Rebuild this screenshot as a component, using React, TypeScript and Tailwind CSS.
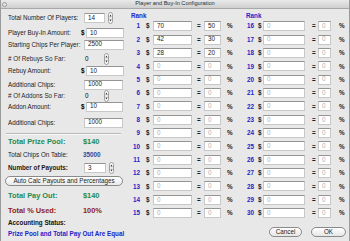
import React from "react";

const ranksA = [
  { n: 1, amt: "70", pct: "50" },
  { n: 2, amt: "42", pct: "30" },
  { n: 3, amt: "28", pct: "20" },
  ...Array.from({ length: 12 }, (_, i) => ({ n: i + 4, amt: "0", pct: "0" })),
];
const ranksB = Array.from({ length: 15 }, (_, i) => ({ n: i + 16, amt: "0", pct: "0" }));

function Field({ value, w, dim }: { value: string; w: string; dim?: boolean }) {
  return (
    <div
      className={`h-[10px] ${w} bg-white border border-[#c8c8c8] border-t-[#949494] flex items-center pl-[3px] leading-none ${
        dim ? "text-[#b0b0b0]" : "text-[#1a1a1a]"
      }`}
    >
      {value}
    </div>
  );
}

function Stepper() {
  return (
    <svg width="5" height="12" viewBox="0 0 5 12">
      <rect x="0.5" y="0.5" width="4" height="11" rx="2" fill="#fafafa" stroke="#8a8a8a" strokeWidth="0.8" />
      <line x1="0.8" y1="6" x2="4.2" y2="6" stroke="#b5b5b5" strokeWidth="0.5" />
      <path d="M1.4 4.5 L2.5 2.6 L3.6 4.5Z" fill="#333" />
      <path d="M1.4 7.5 L2.5 9.4 L3.6 7.5Z" fill="#333" />
    </svg>
  );
}

function Row({ mt, h, label, labelCls, children }: { mt: string; h: string; label: string; labelCls?: string; children?: React.ReactNode }) {
  return (
    <div className={`flex items-center pl-[7px] ${mt} ${h}`}>
      <div className={`w-[73px] shrink-0 whitespace-nowrap ${labelCls ?? "text-[6.3px] text-[#1a1a1a]"}`}>{label}</div>
      {children}
    </div>
  );
}

function RankCol({ rows, wide }: { rows: { n: number; amt: string; pct: string }[]; wide?: boolean }) {
  return (
    <div className="flex flex-col">
      <div className={`h-[8.5px] mt-[2px] flex items-center font-bold text-[6.3px] text-[#2323c8] ${wide ? "ml-[3px]" : "ml-[2px]"}`}>Rank</div>
      {rows.map((r) => (
        <div key={r.n} className="h-[13.36px] flex items-center text-[6.3px]">
          <span className="w-[11px] text-right font-bold text-[#2323c8]">{r.n}</span>
          <span className={`font-bold text-[#222] ${wide ? "ml-[4px] w-[4px]" : "ml-[6px] w-[4px]"}`}>$</span>
          <div className={wide ? "ml-[1px]" : "ml-[3px]"}>
            <Field value={r.amt} w={wide ? "w-[42px]" : "w-[39px]"} dim={r.amt === "0"} />
          </div>
          <span className={`font-bold text-[#222] w-[4px] ${wide ? "ml-[7px]" : "ml-[5px]"}`}>=</span>
          <div className={wide ? "ml-[2px]" : "ml-[3px]"}>
            <Field value={r.pct} w={wide ? "w-[13px]" : "w-[17px]"} dim={r.pct === "0"} />
          </div>
          <span className={`font-bold text-[#222] ${wide ? "ml-[8px]" : "ml-[6px]"}`}>%</span>
        </div>
      ))}
    </div>
  );
}

export default function App() {
  return (
    <div className="w-[350px] h-[241px] overflow-hidden bg-[#e8e8e8] border-x border-[#9a9a9a] font-['Liberation_Sans',Arial,sans-serif] flex flex-col">
      <div className="h-[9px] shrink-0 relative flex items-center justify-center bg-gradient-to-b from-[#e9e9e9] to-[#cfcfcf] border-b border-[#a8a8a8]">
        <div className="absolute left-[1px] top-[1.5px] w-[5px] h-[5px] rounded-full border border-[#9b9b9b] bg-[#e4e4e4]" />
        <span className="text-[5.6px] text-[#2b2b2b] leading-none">Player and Buy-In Configuration</span>
      </div>
      <div className="flex flex-1">
        <div className="w-[124px] shrink-0 flex flex-col">
          <Row mt="mt-[3px]" h="h-[12px]" label="Total Number Of Players:">
            <div className="ml-[3px] text-[6.3px]"><Field value="14" w="w-[21px]" /></div>
            <div className="ml-[3px]"><Stepper /></div>
          </Row>
          <Row mt="mt-[3px]" h="h-[12px]" label="Player Buy-In Amount:">
            <span className="text-[6.3px] font-bold w-[5px]">$</span>
            <div className="text-[6.3px]"><Field value="10" w="w-[38px]" /></div>
          </Row>
          <Row mt="mt-0" h="h-[11px]" label="Starting Chips Per Player:">
            <div className="ml-[3px] text-[6.3px]"><Field value="2500" w="w-[40px]" /></div>
          </Row>
          <Row mt="mt-[3px]" h="h-[12px]" label="# Of Rebuys So Far:" labelCls="text-[6.3px] text-[#2a2a2a]">
            <span className="ml-[4px] text-[6.3px] w-[19px]">0</span>
            <Stepper />
          </Row>
          <Row mt="mt-0" h="h-[12px]" label="Rebuy Amount:">
            <span className="text-[6.3px] font-bold w-[5px]">$</span>
            <div className="text-[6.3px]"><Field value="10" w="w-[38px]" /></div>
          </Row>
          <Row mt="mt-[2px]" h="h-[11px]" label="Additional Chips:">
            <div className="ml-[3px] text-[6.3px]"><Field value="1000" w="w-[39px]" /></div>
          </Row>
          <Row mt="mt-0" h="h-[11px]" label="# Of Addons So Far:" labelCls="text-[6.3px] text-[#2a2a2a]">
            <span className="ml-[4px] text-[6.3px] w-[19px]">0</span>
            <Stepper />
          </Row>
          <Row mt="mt-0" h="h-[11px]" label="Addon Amount:">
            <span className="text-[6.3px] font-bold w-[5px]">$</span>
            <div className="text-[6.3px]"><Field value="10" w="w-[37px]" /></div>
          </Row>
          <Row mt="mt-[5px]" h="h-[11px]" label="Additional Chips:">
            <div className="ml-[3px] text-[6.3px]"><Field value="1000" w="w-[39px]" /></div>
          </Row>
          <div className="mt-[5px] ml-[5px] w-[115px] border-t border-[#b9b9b9] border-b border-b-[#f8f8f8]" />
          <Row mt="mt-[2px]" h="h-[10px]" label="Total Prize Pool:" labelCls="text-[7.4px] font-bold text-[#1f8a50]">
            <span className="ml-[2px] text-[7.4px] font-bold text-[#1f8a50]">$140</span>
          </Row>
          <Row mt="mt-[3px]" h="h-[10px]" label="Total Chips On Table:">
            <span className="ml-[2px] text-[6.3px] font-bold text-[#2c4aa0]">35000</span>
          </Row>
          <Row mt="mt-[2px]" h="h-[12px]" label="Number of Payouts:" labelCls="text-[6.3px] font-bold text-[#1a1a1a]">
            <div className="ml-[3px] text-[6.3px]"><Field value="3" w="w-[22px]" /></div>
            <div className="ml-[3px]"><Stepper /></div>
          </Row>
          <div className="mt-[2px] ml-[4px] w-[118px] h-[10px] rounded-full border border-[#8a8a8a] bg-gradient-to-b from-[#ffffff] to-[#e9e9e9] flex items-center justify-center text-[6.3px] text-[#1a1a1a] whitespace-nowrap">
            Auto Calc Payouts and Percentages
          </div>
          <Row mt="mt-[5px]" h="h-[10px]" label="Total Pay Out:" labelCls="text-[7.4px] font-bold text-[#1f8a50]">
            <span className="ml-[2px] text-[7.4px] font-bold text-[#1f8a50]">$140</span>
          </Row>
          <Row mt="mt-[5px]" h="h-[10px]" label="Total % Used:" labelCls="text-[7.4px] font-bold text-[#8c1c1c]">
            <span className="ml-[2px] text-[7.4px] font-bold text-[#8c1c1c]">100%</span>
          </Row>
          <div className="mt-[2px] h-[10px] pl-[7px] flex items-center text-[6.3px] font-bold text-[#111]">Accounting Status:</div>
          <div className="mt-[1px] h-[10px] pl-[7px] flex items-center text-[6.3px] font-bold text-[#2323c8] whitespace-nowrap">
            Prize Pool and Total Pay Out Are Equal
          </div>
        </div>
        <div className="flex-1 flex flex-col">
          <div className="flex pl-[4px]">
            <div className="w-[114px]"><RankCol rows={ranksA} /></div>
            <RankCol rows={ranksB} wide />
          </div>
          <div className="mt-[7px] flex justify-end gap-[9px] pr-[3px] text-[6.3px] text-[#1a1a1a]">
            <div className="w-[33px] h-[10px] rounded-full border border-[#8a8a8a] bg-gradient-to-b from-[#ffffff] to-[#e6e6e6] flex items-center justify-center">Cancel</div>
            <div className="w-[35px] h-[10px] rounded-full border border-[#8a8a8a] bg-gradient-to-b from-[#ffffff] to-[#e6e6e6] flex items-center justify-center">OK</div>
          </div>
        </div>
      </div>
    </div>
  );
}
